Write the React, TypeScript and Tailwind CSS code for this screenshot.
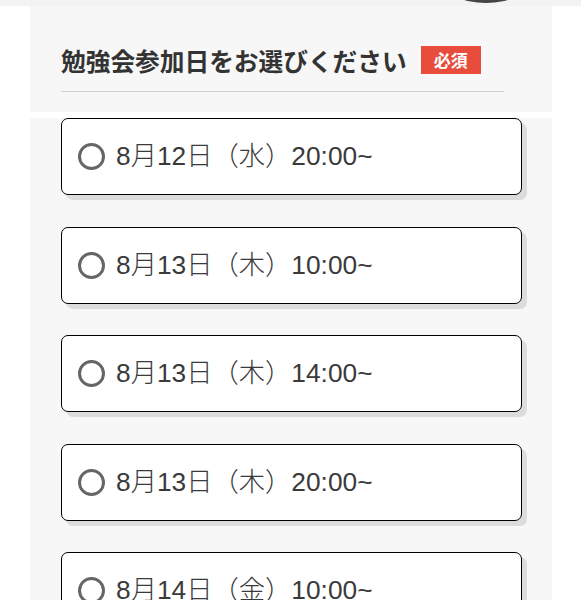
const dates = [
  "8月12日（水）20:00~",
  "8月13日（木）10:00~",
  "8月13日（木）14:00~",
  "8月13日（木）20:00~",
  "8月14日（金）10:00~",
];

const font = {
  fontFamily: '"Noto Sans CJK JP", "Noto Sans", sans-serif',
};

// Latin digits in the options use an Arial-width face, kana/kanji fall through to Noto CJK
const optionFont = {
  fontFamily: '"Liberation Sans", "Noto Sans CJK JP", sans-serif',
};

function DateOption({ label }: { label: string }) {
  return (
    <label className="flex h-[77px] w-[461px] cursor-pointer items-center rounded-[7px] border-[1.5px] border-black bg-white pl-[16px] shadow-[5px_5px_0_0_#dcdcdc]">
      <span className="h-[27px] w-[27px] shrink-0 rounded-full border-[3px] border-[#666]" />
      <span className="ml-[11px] text-[26.3px] font-light leading-none text-[#3a3a3a]" style={optionFont}>
        {label}
      </span>
    </label>
  );
}

export default function App() {
  return (
    <div className="h-[600px] overflow-hidden bg-white" style={font}>
      <div className="relative h-[6px] overflow-hidden bg-[#f3f3f3]">
        <svg className="absolute left-[440px] top-[-40px]" width="92" height="44" viewBox="0 0 92 44">
          <ellipse cx="46" cy="20" rx="44" ry="23" fill="#444" />
        </svg>
      </div>
      <div className="mx-[30px] w-[522px]">
        <div className="h-[106px] bg-[#f7f7f7] px-[31px] pt-[36px]">
          <div className="flex w-[443px] items-center border-b border-[#d0d0d0] pb-[13px]">
            <h2 className="text-[24.7px] font-bold leading-[36px] text-[#333]">勉強会参加日をお選びください</h2>
            <span className="ml-[14px] flex h-[28px] w-[60px] items-center justify-center bg-[#e74c3c] text-[17px] font-bold text-white">
              必須
            </span>
          </div>
        </div>
        <div className="mt-[6px] flex flex-col gap-[31.5px] bg-[#f7f7f7] px-[31px] pb-[40px]">
          {dates.map((d) => (
            <DateOption key={d} label={d} />
          ))}
        </div>
      </div>
    </div>
  );
}
